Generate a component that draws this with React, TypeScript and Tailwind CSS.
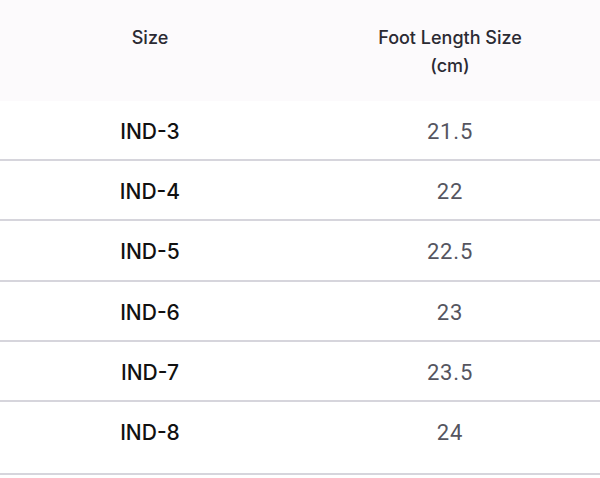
import React from 'react'

const rows = [
  { size: 'IND-3', foot: '21.5', h: 'h-[60px]' },
  { size: 'IND-4', foot: '22', h: 'h-[60px]' },
  { size: 'IND-5', foot: '22.5', h: 'h-[61px]' },
  { size: 'IND-6', foot: '23', h: 'h-[60px]' },
  { size: 'IND-7', foot: '23.5', h: 'h-[60px]' },
  { size: 'IND-8', foot: '24', h: 'h-[73px]' },
]

const App = () => {
  return (
    <div className="w-[600px] h-[478px] bg-white overflow-hidden">
      <div className="grid grid-cols-2 h-[101px] bg-[#fcfafc] pt-6 text-[#2b2a33] text-[18px] leading-[28px] font-medium font-['Inter',sans-serif] text-center">
        <div>Size</div>
        <div>
          Foot Length Size
          <br />
          (cm)
        </div>
      </div>
      {rows.map((row) => (
        <div key={row.size} className={`grid grid-cols-2 ${row.h} pt-[17px] leading-[28px] border-b-2 border-[#d6d5dc] text-center`}>
          <div className="text-[21px] font-medium text-[#111111] font-['Inter',sans-serif]">{row.size}</div>
          <div className="text-[22px] tracking-[0.8px] text-[#55555f] font-['Roboto',sans-serif]">{row.foot}</div>
        </div>
      ))}
    </div>
  )
}

export default App
